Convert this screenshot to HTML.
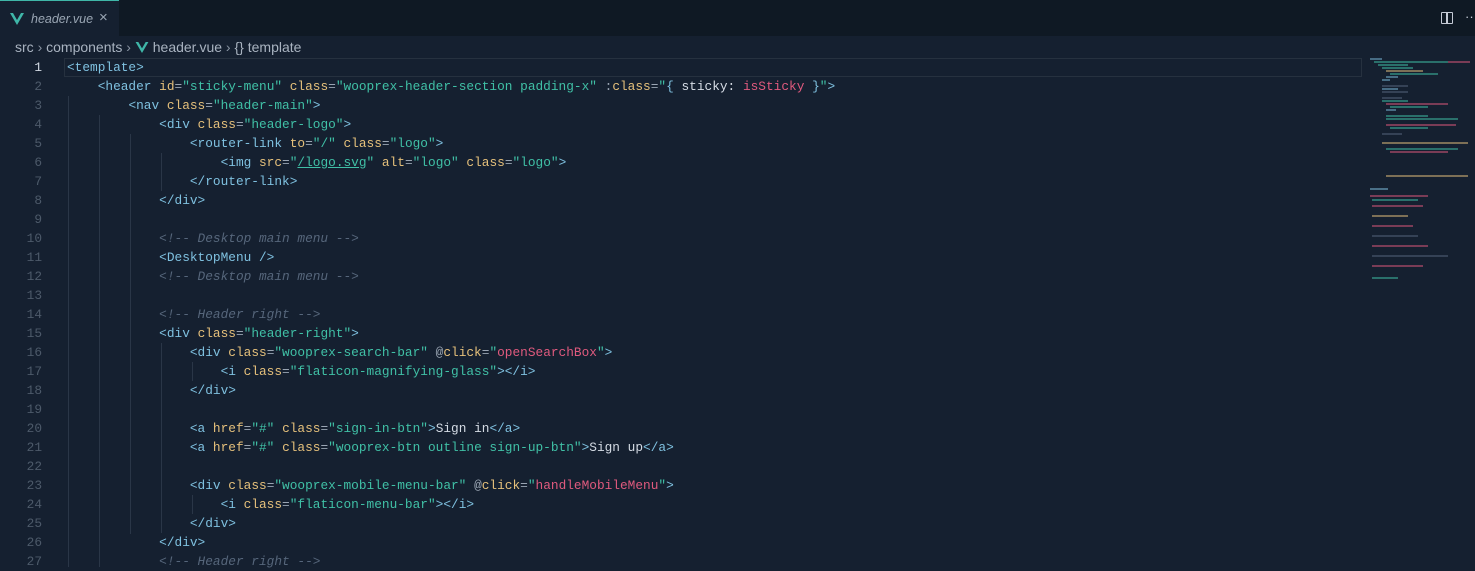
<!DOCTYPE html>
<html><head><meta charset="utf-8"><style>
*{margin:0;padding:0;box-sizing:border-box}
body{width:1475px;height:567px;background:#152030;overflow:hidden;position:relative;font-family:"Liberation Mono",monospace;}
.tabs{position:absolute;left:0;top:0;width:1475px;height:36px;background:#0f1924}
.tab{position:absolute;left:0;top:0;width:119px;height:36px;background:#152030;border-top:1px solid #3fb6a8;font-family:"Liberation Sans",sans-serif;font-size:12.5px;color:#9aa6b4;font-style:italic}
.crumb{position:absolute;top:39px;left:15px;font-family:"Liberation Sans",sans-serif;font-size:14px;color:#a9b3c0}
.ln{position:absolute;left:0;width:42px;text-align:right;font-size:12.8px;color:#4d5a6a;line-height:19px}
.code{position:absolute;left:67px;font-size:12.8px;line-height:19px;white-space:pre;color:#d4dbe4}
.t{color:#7fc1e0}.a{color:#e5c07b}.s{color:#40c0a6}.e{color:#9aa5b3}.p{color:#e05a7e}.c{color:#56667b;font-style:italic}.w{color:#d7dde6}
.g{position:absolute;width:1px;background:#2a3647}
</style></head><body>
<div class="tabs"></div>
<div class="tab"><svg style="position:absolute;left:10px;top:12px" width="14" height="12" viewBox="0 0 14 12"><path d="M0 0h3l4 7 4-7h3L7 12z" fill="#3fb6a8"/></svg><span style="position:absolute;left:31px;top:11px">header.vue</span><span style="position:absolute;left:99px;top:8px;font-style:normal;font-size:15px">×</span></div>
<div style="position:absolute;left:1441px;top:12px;width:12px;height:12px;border:1.5px solid #c5cbd6;border-radius:1px"></div>
<div style="position:absolute;left:1446px;top:12px;width:1.5px;height:12px;background:#c5cbd6"></div>
<div style="position:absolute;left:1465px;top:9px;color:#c5cbd6;font-family:'Liberation Sans';font-size:13px">···</div>
<div class="crumb">src <span style="color:#8a95a3">›</span> components <span style="color:#8a95a3">›</span> <svg width="14" height="11" viewBox="0 0 14 12" style="vertical-align:-1px"><path d="M0 0h3l4 7 4-7h3L7 12z" fill="#3fb6a8"/></svg> header.vue <span style="color:#8a95a3">›</span> {} template</div>
<div style="position:absolute;left:64px;top:58px;width:1298px;height:19px;border:1px solid #26313f"></div>
<div class="g" style="left:68px;top:96px;height:471px"></div>
<div class="g" style="left:99px;top:115px;height:452px"></div>
<div class="g" style="left:130px;top:134px;height:400px"></div>
<div class="g" style="left:161px;top:153px;height:38px"></div>
<div class="g" style="left:161px;top:343px;height:190px"></div>
<div class="g" style="left:192px;top:362px;height:19px"></div>
<div class="g" style="left:192px;top:495px;height:19px"></div>
<div class="ln" style="top:58px"><span style="color:#d4dbe4">1</span><br>2<br>3<br>4<br>5<br>6<br>7<br>8<br>9<br>10<br>11<br>12<br>13<br>14<br>15<br>16<br>17<br>18<br>19<br>20<br>21<br>22<br>23<br>24<br>25<br>26<br>27</div>
<div class="code" style="top:58px"><span class="t">&lt;template&gt;</span>
    <span class="t">&lt;header</span> <span class="a">id</span><span class="e">=</span><span class="s">"sticky-menu"</span> <span class="a">class</span><span class="e">=</span><span class="s">"wooprex-header-section padding-x"</span> <span class="e">:</span><span class="a">class</span><span class="e">=</span><span class="s">"</span><span class="t">{</span> <span class="w">sticky:</span> <span class="p">isSticky</span> <span class="t">}</span><span class="s">"</span><span class="t">&gt;</span>
        <span class="t">&lt;nav</span> <span class="a">class</span><span class="e">=</span><span class="s">"header-main"</span><span class="t">&gt;</span>
            <span class="t">&lt;div</span> <span class="a">class</span><span class="e">=</span><span class="s">"header-logo"</span><span class="t">&gt;</span>
                <span class="t">&lt;router-link</span> <span class="a">to</span><span class="e">=</span><span class="s">"/"</span> <span class="a">class</span><span class="e">=</span><span class="s">"logo"</span><span class="t">&gt;</span>
                    <span class="t">&lt;img</span> <span class="a">src</span><span class="e">=</span><span class="s">"<u>/logo.svg</u>"</span> <span class="a">alt</span><span class="e">=</span><span class="s">"logo"</span> <span class="a">class</span><span class="e">=</span><span class="s">"logo"</span><span class="t">&gt;</span>
                <span class="t">&lt;/router-link&gt;</span>
            <span class="t">&lt;/div&gt;</span>

            <span class="c">&lt;!-- Desktop main menu --&gt;</span>
            <span class="t">&lt;DesktopMenu /&gt;</span>
            <span class="c">&lt;!-- Desktop main menu --&gt;</span>

            <span class="c">&lt;!-- Header right --&gt;</span>
            <span class="t">&lt;div</span> <span class="a">class</span><span class="e">=</span><span class="s">"header-right"</span><span class="t">&gt;</span>
                <span class="t">&lt;div</span> <span class="a">class</span><span class="e">=</span><span class="s">"wooprex-search-bar"</span> <span class="e">@</span><span class="a">click</span><span class="e">=</span><span class="s">"</span><span class="p">openSearchBox</span><span class="s">"</span><span class="t">&gt;</span>
                    <span class="t">&lt;i</span> <span class="a">class</span><span class="e">=</span><span class="s">"flaticon-magnifying-glass"</span><span class="t">&gt;&lt;/i&gt;</span>
                <span class="t">&lt;/div&gt;</span>

                <span class="t">&lt;a</span> <span class="a">href</span><span class="e">=</span><span class="s">"#"</span> <span class="a">class</span><span class="e">=</span><span class="s">"sign-in-btn"</span><span class="t">&gt;</span>Sign in<span class="t">&lt;/a&gt;</span>
                <span class="t">&lt;a</span> <span class="a">href</span><span class="e">=</span><span class="s">"#"</span> <span class="a">class</span><span class="e">=</span><span class="s">"wooprex-btn outline sign-up-btn"</span><span class="t">&gt;</span>Sign up<span class="t">&lt;/a&gt;</span>

                <span class="t">&lt;div</span> <span class="a">class</span><span class="e">=</span><span class="s">"wooprex-mobile-menu-bar"</span> <span class="e">@</span><span class="a">click</span><span class="e">=</span><span class="s">"</span><span class="p">handleMobileMenu</span><span class="s">"</span><span class="t">&gt;</span>
                    <span class="t">&lt;i</span> <span class="a">class</span><span class="e">=</span><span class="s">"flaticon-menu-bar"</span><span class="t">&gt;&lt;/i&gt;</span>
                <span class="t">&lt;/div&gt;</span>
            <span class="t">&lt;/div&gt;</span>
            <span class="c">&lt;!-- Header right --&gt;</span></div>
<svg style="position:absolute;left:1368px;top:56px" width="107" height="230">
<g stroke-width="1.2" opacity="0.8">
<line x1="2" y1="3" x2="14" y2="3" stroke="#7fc1e0"/>
<line x1="6" y1="6" x2="80" y2="6" stroke="#40c0a6"/><line x1="80" y1="6" x2="102" y2="6" stroke="#e05a7e"/>
<line x1="10" y1="9" x2="40" y2="9" stroke="#40c0a6"/>
<line x1="14" y1="12" x2="45" y2="12" stroke="#40c0a6"/>
<line x1="18" y1="15" x2="55" y2="15" stroke="#e5c07b"/>
<line x1="22" y1="18" x2="70" y2="18" stroke="#40c0a6"/>
<line x1="18" y1="21" x2="30" y2="21" stroke="#7fc1e0"/>
<line x1="14" y1="24" x2="22" y2="24" stroke="#7fc1e0"/>
<line x1="14" y1="30" x2="40" y2="30" stroke="#56667b"/>
<line x1="14" y1="33" x2="30" y2="33" stroke="#7fc1e0"/>
<line x1="14" y1="36" x2="40" y2="36" stroke="#56667b"/>
<line x1="14" y1="42" x2="34" y2="42" stroke="#56667b"/>
<line x1="14" y1="45" x2="40" y2="45" stroke="#40c0a6"/>
<line x1="18" y1="48" x2="80" y2="48" stroke="#e05a7e"/>
<line x1="22" y1="51" x2="60" y2="51" stroke="#40c0a6"/>
<line x1="18" y1="54" x2="28" y2="54" stroke="#7fc1e0"/>
<line x1="18" y1="60" x2="60" y2="60" stroke="#40c0a6"/>
<line x1="18" y1="63" x2="90" y2="63" stroke="#40c0a6"/>
<line x1="18" y1="69" x2="88" y2="69" stroke="#e05a7e"/>
<line x1="22" y1="72" x2="60" y2="72" stroke="#40c0a6"/>
<line x1="14" y1="78" x2="34" y2="78" stroke="#56667b"/>
<line x1="14" y1="87" x2="100" y2="87" stroke="#e5c07b"/>
<line x1="18" y1="93" x2="90" y2="93" stroke="#40c0a6"/>
<line x1="22" y1="96" x2="80" y2="96" stroke="#e05a7e"/>
<line x1="18" y1="120" x2="100" y2="120" stroke="#e5c07b"/>
<line x1="2" y1="133" x2="20" y2="133" stroke="#7fc1e0"/>
<line x1="2" y1="140" x2="60" y2="140" stroke="#e05a7e"/>
<line x1="4" y1="144" x2="50" y2="144" stroke="#40c0a6"/>
<line x1="4" y1="150" x2="55" y2="150" stroke="#e05a7e"/>
<line x1="4" y1="160" x2="40" y2="160" stroke="#e5c07b"/>
<line x1="4" y1="170" x2="45" y2="170" stroke="#e05a7e"/>
<line x1="4" y1="180" x2="50" y2="180" stroke="#56667b"/>
<line x1="4" y1="190" x2="60" y2="190" stroke="#e05a7e"/>
<line x1="4" y1="200" x2="80" y2="200" stroke="#56667b"/>
<line x1="4" y1="210" x2="55" y2="210" stroke="#e05a7e"/>
<line x1="4" y1="222" x2="30" y2="222" stroke="#40c0a6"/>
</g></svg>
</body></html>
